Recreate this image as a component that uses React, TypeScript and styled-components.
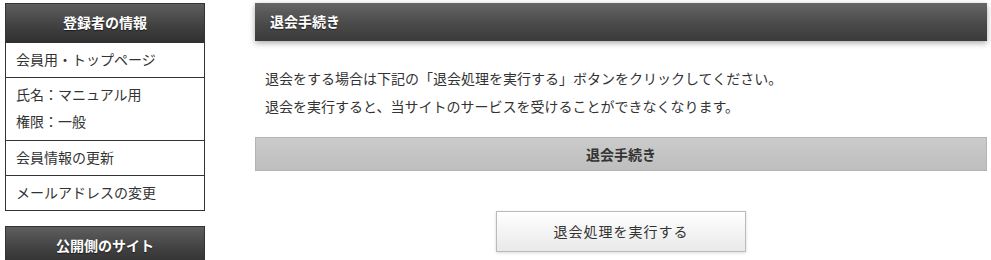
import * as React from 'react';
import styled, { createGlobalStyle } from 'styled-components';

const GlobalStyle = createGlobalStyle`
  html, body {
    margin: 0;
    padding: 0;
    background: #fff;
  }
  body {
    font-family: "Noto Sans CJK JP", "Noto Sans", sans-serif;
    font-size: 14px;
    color: #333;
  }
`;

export const Page = styled.div`
  display: flex;
  align-items: flex-start;
  gap: 50px;
  padding: 3px 4px 0 5px;
  width: 991px;
  height: 260px;
  box-sizing: border-box;
  overflow: hidden;
`;

export const Sidebar = styled.aside`
  display: flex;
  flex-direction: column;
  gap: 15px;
  width: 200px;
  flex: none;
`;

export const Widget = styled.div`
  border: 1px solid #333;
  background: #fff;
`;

export const WidgetTitle = styled.div`
  height: 39px;
  box-sizing: border-box;
  padding-bottom: 3px;
  display: flex;
  align-items: center;
  justify-content: center;
  background: linear-gradient(to bottom, #5e5e5e 0%, #3f3f3f 60%, #2f2f2f 100%);
  color: #fff;
  font-weight: bold;
  font-size: 14px;
  line-height: 18px;
  text-shadow: 0 1px 1px rgba(0, 0, 0, 0.6);
`;

export const WidgetItem = styled.div<{ lineHeight?: number }>`
  padding: 3px 10px 5px;
  line-height: ${(props): string => `${props.lineHeight ?? 26}px`};
  font-size: 14px;
  color: #333;
  &:not(:last-child) {
    border-bottom: 1px solid #333;
  }
`;

export const Main = styled.main`
  flex: 1;
  display: flex;
  flex-direction: column;
`;

export const PanelTitle = styled.h2`
  margin: 0;
  height: 38px;
  box-sizing: border-box;
  padding: 0 15px 2px;
  display: flex;
  align-items: center;
  background: linear-gradient(to bottom, #656565 0%, #4a4a4a 55%, #3a3a3a 100%);
  color: #fff;
  font-weight: bold;
  font-size: 14px;
  box-shadow: 0 2px 6px rgba(0, 0, 0, 0.35);
  text-shadow: 0 1px 1px rgba(0, 0, 0, 0.5);
`;

export const Lead = styled.div`
  padding: 23px 10px 0;
  line-height: 28px;
  font-size: 14px;
  color: #333;
  p {
    margin: 0;
  }
`;

export const SectionBar = styled.div`
  margin-top: 17px;
  height: 32px;
  display: flex;
  align-items: center;
  justify-content: center;
  border: 1px solid #b4b4b4;
  background: linear-gradient(to bottom, #cbcbcb 0%, #bebebe 100%);
  color: #333;
  font-weight: bold;
  font-size: 14px;
`;

export const Actions = styled.div`
  display: flex;
  justify-content: center;
  padding-top: 40px;
`;

export const SubmitButton = styled.button`
  width: 250px;
  height: 41px;
  border: 1px solid #bbb;
  background: linear-gradient(to bottom, #ffffff 0%, #f4f4f4 50%, #e9e9e9 100%);
  box-shadow: 0 1px 3px rgba(0, 0, 0, 0.15);
  font-family: inherit;
  font-size: 14px;
  letter-spacing: 1px;
  color: #333;
  cursor: pointer;
  padding: 0 0 1px;
`;

export default function App(): JSX.Element {
  return (
    <>
      <GlobalStyle />
      <Page>
        <Sidebar>
          <Widget>
            <WidgetTitle>登録者の情報</WidgetTitle>
            <WidgetItem>会員用・トップページ</WidgetItem>
            <WidgetItem lineHeight={27}>
              <div>氏名：マニュアル用</div>
              <div>権限：一般</div>
            </WidgetItem>
            <WidgetItem>会員情報の更新</WidgetItem>
            <WidgetItem>メールアドレスの変更</WidgetItem>
          </Widget>
          <Widget>
            <WidgetTitle>公開側のサイト</WidgetTitle>
            <WidgetItem>トップページ</WidgetItem>
          </Widget>
        </Sidebar>
        <Main>
          <PanelTitle>退会手続き</PanelTitle>
          <Lead>
            <p>退会をする場合は下記の「退会処理を実行する」ボタンをクリックしてください。</p>
            <p>退会を実行すると、当サイトのサービスを受けることができなくなります。</p>
          </Lead>
          <SectionBar>退会手続き</SectionBar>
          <Actions>
            <SubmitButton type="button">退会処理を実行する</SubmitButton>
          </Actions>
        </Main>
      </Page>
    </>
  );
}
